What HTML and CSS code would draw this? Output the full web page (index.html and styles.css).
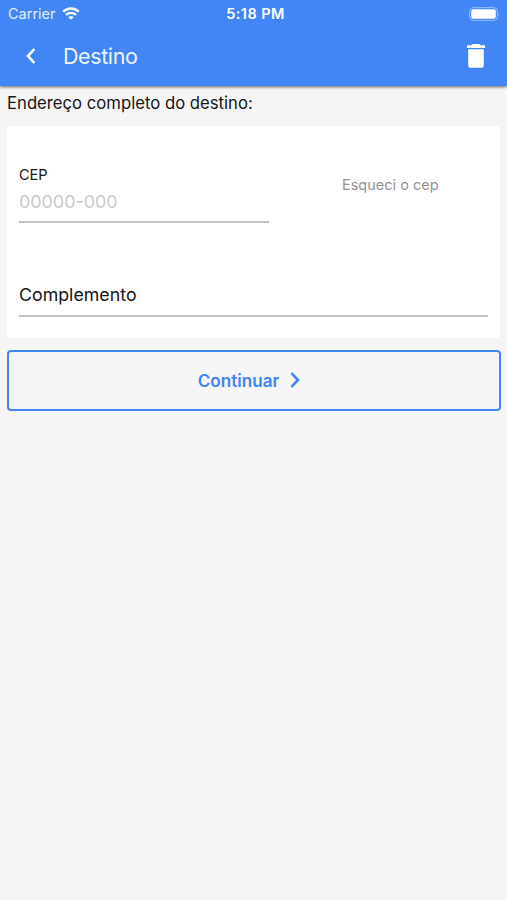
FILE: index.html
```html
<!DOCTYPE html>
<html lang="pt-BR">
<head>
    <meta charset="UTF-8">
    <meta name="viewport" content="width=device-width, initial-scale=1.0">
    <title>Destino</title>
    <link rel="stylesheet" href="styles.css">
</head>
<body>
    <header class="header">
        <div class="status-bar">
            <div class="carrier">
                <span>Carrier</span>
                <svg width="18" height="14" viewBox="0 0 18 14" fill="none" stroke="#fff" stroke-width="2.3">
                    <path d="M1.2 4.7a11.1 11.1 0 0 1 15.6 0"/>
                    <path d="M4 7.9a7.1 7.1 0 0 1 10 0"/>
                    <path d="M9 12.8L6.4 10.2a3.8 3.8 0 0 1 5.2 0z" fill="#fff" stroke="none"/>
                </svg>
            </div>
            <span class="clock">5:18 PM</span>
            <svg class="battery" width="32" height="14" viewBox="0 0 32 14">
                <rect x="0.6" y="0.6" width="27.8" height="12.8" rx="3.6" fill="none" stroke="#fff" stroke-opacity="0.45"/>
                <rect x="2.2" y="2.2" width="24.6" height="9.6" rx="2" fill="#fff"/>
                <path d="M29.8 4.8q1.6 2.2 0 4.4z" fill="#fff" fill-opacity="0.5"/>
            </svg>
        </div>
        <div class="toolbar">
            <button class="icon-button" aria-label="Voltar">
                <svg width="10" height="16" viewBox="0 0 10 16" fill="none" stroke="#fff" stroke-width="2.6">
                    <path d="M8.4 1.2L1.9 8l6.5 6.8"/>
                </svg>
            </button>
            <h1>Destino</h1>
            <button class="icon-button trash" aria-label="Apagar">
                <svg width="18" height="24" viewBox="0 0 18 24" fill="#fff">
                    <path d="M0 1.3h4.5L5.6 0h6.8l1.1 1.3H18V4H0z"/>
                    <path d="M1.2 5.3h15.6v15.9a2.6 2.6 0 0 1-2.6 2.6H3.8a2.6 2.6 0 0 1-2.6-2.6z"/>
                </svg>
            </button>
        </div>
    </header>

    <main>
        <p class="intro">Endereço completo do destino:</p>
        <form class="card">
            <div class="cep-row">
                <div class="field cep">
                    <label for="cep">CEP</label>
                    <input id="cep" type="text" placeholder="00000-000">
                </div>
                <button type="button" class="forgot">Esqueci o cep</button>
            </div>
            <div class="field">
                <input class="complement" type="text" placeholder="Complemento">
            </div>
        </form>
        <button class="continue">
            <span>Continuar</span>
            <svg width="10" height="16" viewBox="0 0 10 16" fill="none" stroke="#4285f4" stroke-width="2.6">
                <path d="M1.4 1.2L8 8l-6.6 6.8"/>
            </svg>
        </button>
    </main>
</body>
</html>
```
FILE: styles.css
```css
* {
    box-sizing: border-box;
}
body {
    margin: 0;
    min-height: 100vh;
    background-color: #f5f5f5;
    color: #151515;
    font-family: Inter, "Liberation Sans", sans-serif;
}
button {
    padding: 0;
    border: none;
    background: none;
    font-family: inherit;
}
svg {
    display: block;
}
.header {
    height: 86px;
    background-color: #4285f4;
    color: white;
    box-shadow: 0 1px 3px rgba(0, 0, 0, 0.6);
}
.status-bar {
    display: grid;
    grid-template-columns: 1fr auto 1fr;
    align-items: center;
    height: 27px;
    padding: 0 6px 0 8px;
}
.carrier {
    display: flex;
    align-items: center;
    gap: 6px;
    font-size: 14.5px;
    color: #e3edff;
}
.clock {
    padding-left: 2px;
    font-size: 14.5px;
    font-weight: 600;
    letter-spacing: 0.4px;
}
.battery {
    justify-self: end;
}
.toolbar {
    display: flex;
    align-items: center;
    height: 57px;
    padding: 0 22px 0 26px;
}
.toolbar h1 {
    margin: 1px 0 0 27px;
    font-size: 21.5px;
    font-weight: 400;
    letter-spacing: -0.4px;
    color: #edf3ff;
}
.trash {
    margin-left: auto;
}
main {
    padding: 0 7px;
}
.intro {
    margin: 0;
    height: 40px;
    line-height: 35px;
    font-size: 16.7px;
}
.card {
    height: 212px;
    padding: 39px 12px 0;
    border-radius: 4px;
    background-color: white;
}
.cep-row {
    display: flex;
    height: 108px;
}
.field {
    display: flex;
    flex-direction: column;
}
.cep {
    width: 250px;
}
.field label {
    font-size: 14.5px;
    line-height: 20px;
}
.field input {
    width: 100%;
    height: 38px;
    padding: 0 0 4px;
    border: none;
    border-bottom: 2px solid #c4c4c4;
    border-radius: 0;
    background: none;
    font-family: inherit;
    font-size: 17.9px;
    outline: none;
}
.field input::placeholder {
    color: #c9c9ce;
}
.field .complement {
    height: 44px;
    padding: 0;
    font-size: 17.8px;
}
.field .complement::placeholder {
    color: #151515;
}
.forgot {
    align-self: flex-start;
    margin: 10px 0 0 73px;
    font-size: 14.5px;
    line-height: 20px;
    color: #929292;
}
.continue {
    display: flex;
    align-items: center;
    justify-content: center;
    gap: 11px;
    width: 494px;
    height: 61px;
    margin-top: 12px;
    padding: 0 10px 1px 0;
    border: 2px solid #4285f4;
    border-radius: 4px;
    font-size: 17.1px;
    font-weight: 600;
    color: #4285f4;
}
```
